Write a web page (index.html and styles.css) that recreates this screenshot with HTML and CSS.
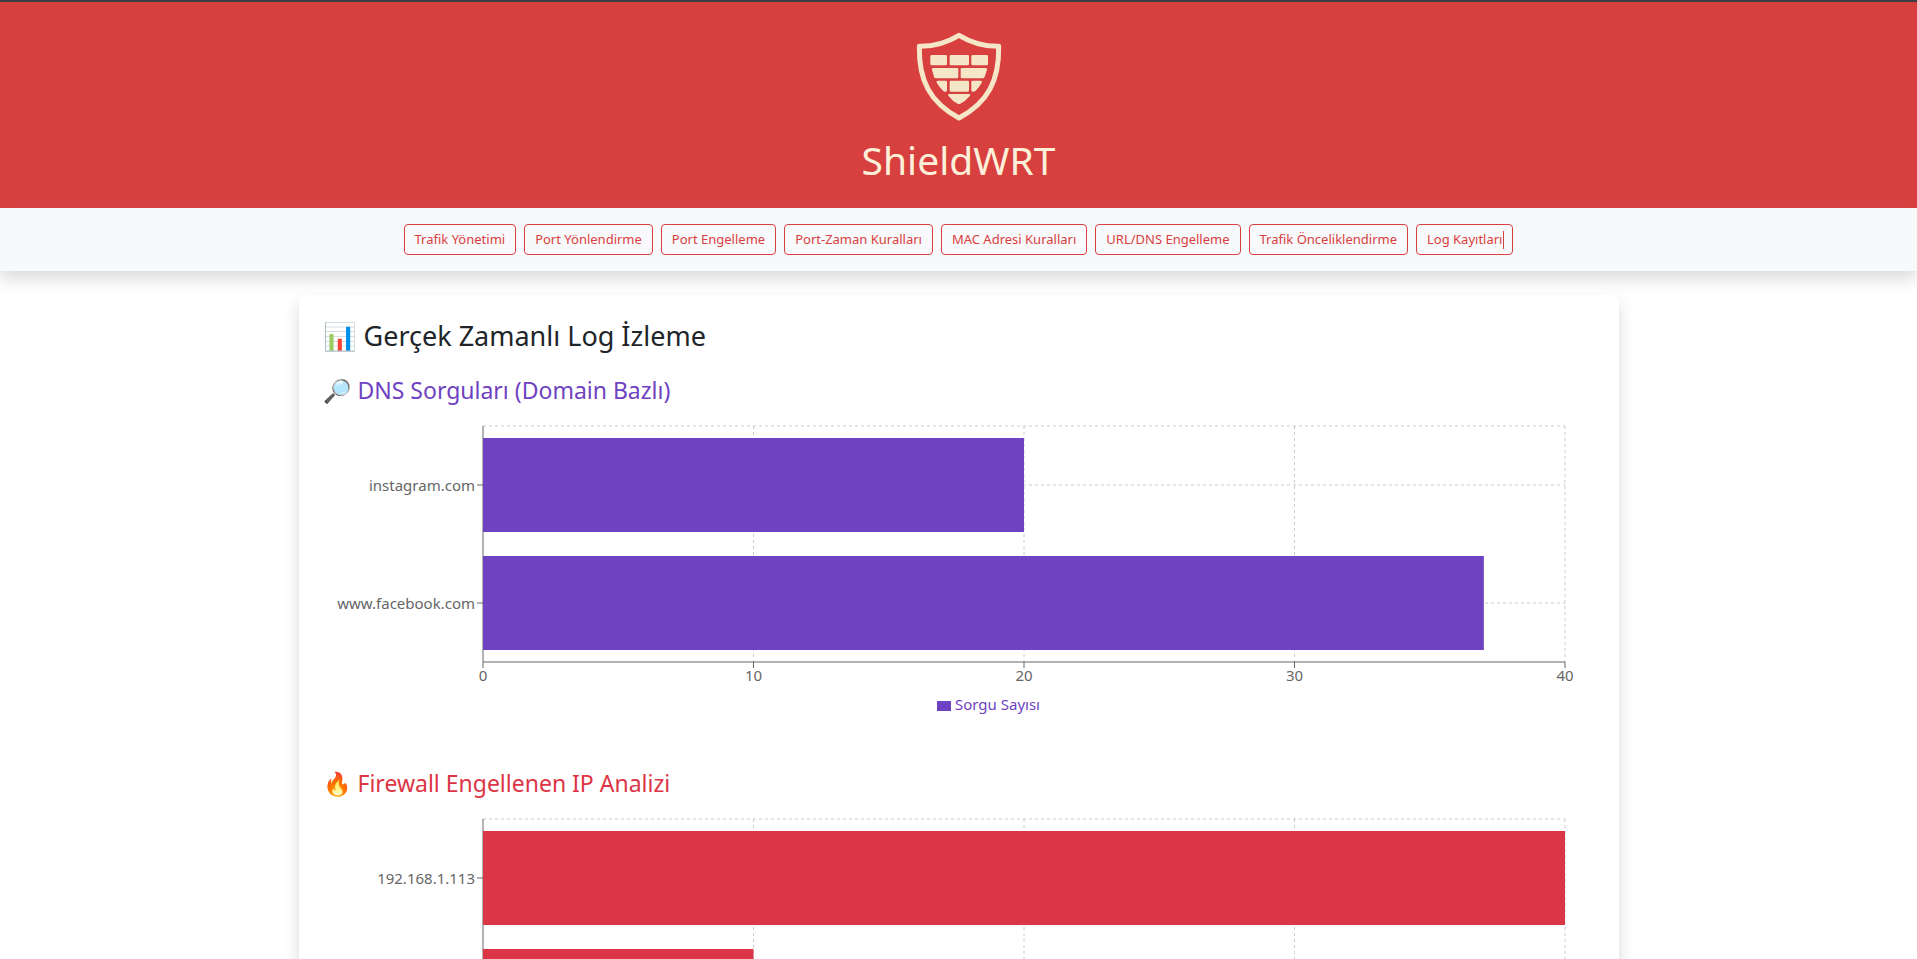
FILE: index.html
```html
<!DOCTYPE html>
<html lang="tr">
<head>
  <meta charset="utf-8">
  <meta name="viewport" content="width=device-width, initial-scale=1">
  <title>ShieldWRT</title>
  <link rel="stylesheet" href="styles.css">
</head>
<body>
  <header class="brand">
    <svg class="brand-logo" viewBox="0 3 300 300" aria-hidden="true">
      <path class="shield" d="M150 31 Q94 65 31 64 C29 166 63 233 150 279 C237 233 271 166 269 64 Q206 65 150 31 Z"/>
      <g class="bricks">
        <rect x="64" y="90" width="50" height="31" rx="4"/>
        <rect x="122" y="90" width="58" height="31" rx="4"/>
        <rect x="187" y="90" width="50" height="31" rx="4"/>
        <path d="M72 129 H144 Q148 129 148 133 V156 Q148 160 144 160 H81 Q77 160 75 155 L69 134 Q68 129 72 129 Z"/>
        <path d="M159 129 H231 Q235 129 234 134 L227 155 Q225 160 221 160 H159 Q155 160 155 156 V133 Q155 129 159 129 Z"/>
        <path d="M86 167 H110 Q114 167 114 171 V196 Q114 200 110 200 Q106 201 102 197 Q92 188 83 173 Q81 167 86 167 Z"/>
        <rect x="122" y="167" width="58" height="33" rx="4"/>
        <path d="M191 167 H215 Q221 167 218 173 Q209 189 200 197 Q195 201 191 200 Q187 200 187 196 V171 Q187 167 191 167 Z"/>
        <path d="M121 207 H181 Q186 207 183 212 Q169 229 154 236 Q150 238 146 236 Q131 229 118 212 Q115 207 121 207 Z"/>
      </g>
    </svg>
    <h1 class="brand-name">ShieldWRT</h1>
  </header>

  <nav class="menu">
    <a class="menu-link" href="#trafik">Trafik Yönetimi</a>
    <a class="menu-link" href="#port">Port Yönlendirme</a>
    <a class="menu-link" href="#port-engelleme">Port Engelleme</a>
    <a class="menu-link" href="#port-zaman">Port-Zaman Kuralları</a>
    <a class="menu-link" href="#mac">MAC Adresi Kuralları</a>
    <a class="menu-link" href="#dns">URL/DNS Engelleme</a>
    <a class="menu-link" href="#oncelik">Trafik Önceliklendirme</a>
    <a class="menu-link caret" href="#log">Log Kayıtları</a>
  </nav>

  <main class="card">
    <h2 class="card-title">📊 Gerçek Zamanlı Log İzleme</h2>

    <section class="report dns">
      <h3 class="report-title">🔎 DNS Sorguları (Domain Bazlı)</h3>
      <div class="chart">
        <svg class="plot" role="img" aria-label="DNS Sorguları">
          <g class="grid">
            <line x1="0" y1="0" x2="100%" y2="0"/>
            <line x1="0" y1="59" x2="100%" y2="59"/>
            <line x1="0" y1="177" x2="100%" y2="177"/>
            <line x1="25%" y1="0" x2="25%" y2="236"/>
            <line x1="50%" y1="0" x2="50%" y2="236"/>
            <line x1="75%" y1="0" x2="75%" y2="236"/>
            <line x1="100%" y1="0" x2="100%" y2="236"/>
          </g>
          <g class="axis">
            <line x1="0" y1="0" x2="0" y2="236"/>
            <line x1="0" y1="236" x2="100%" y2="236"/>
            <line x1="-6" y1="59" x2="0" y2="59"/>
            <line x1="-6" y1="177" x2="0" y2="177"/>
            <line x1="0" y1="236" x2="0" y2="242"/>
            <line x1="25%" y1="236" x2="25%" y2="242"/>
            <line x1="50%" y1="236" x2="50%" y2="242"/>
            <line x1="75%" y1="236" x2="75%" y2="242"/>
            <line x1="100%" y1="236" x2="100%" y2="242"/>
          </g>
          <g class="bars">
            <rect x="0" y="12" width="50%" height="94"/>
            <rect x="0" y="130" width="92.5%" height="94"/>
          </g>
          <g class="label-y">
            <text x="-8" y="65">instagram.com</text>
            <text x="-8" y="183">www.facebook.com</text>
          </g>
          <g class="label-x">
            <text x="0" y="255">0</text>
            <text x="25%" y="255">10</text>
            <text x="50%" y="255">20</text>
            <text x="75%" y="255">30</text>
            <text x="100%" y="255">40</text>
          </g>
        </svg>
        <div class="legend"><span class="swatch"></span>Sorgu Sayısı</div>
      </div>
    </section>

    <section class="report firewall">
      <h3 class="report-title">🔥 Firewall Engellenen IP Analizi</h3>
      <div class="chart">
        <svg class="plot" role="img" aria-label="Engellenen IP adresleri">
          <g class="grid">
            <line x1="0" y1="0" x2="100%" y2="0"/>
            <line x1="0" y1="59" x2="100%" y2="59"/>
            <line x1="0" y1="177" x2="100%" y2="177"/>
            <line x1="25%" y1="0" x2="25%" y2="236"/>
            <line x1="50%" y1="0" x2="50%" y2="236"/>
            <line x1="75%" y1="0" x2="75%" y2="236"/>
            <line x1="100%" y1="0" x2="100%" y2="236"/>
          </g>
          <g class="axis">
            <line x1="0" y1="0" x2="0" y2="236"/>
            <line x1="0" y1="236" x2="100%" y2="236"/>
            <line x1="-6" y1="59" x2="0" y2="59"/>
            <line x1="-6" y1="177" x2="0" y2="177"/>
          </g>
          <g class="bars">
            <rect x="0" y="12" width="100%" height="94"/>
            <rect x="0" y="130" width="25%" height="94"/>
          </g>
          <g class="label-y">
            <text x="-8" y="65">192.168.1.113</text>
          </g>
        </svg>
      </div>
    </section>
  </main>
</body>
</html>
```
FILE: styles.css
```css
* {
  box-sizing: border-box;
}

body {
  margin: 0;
  background: #fff;
  color: #212529;
  font-family: "Noto Sans", "Open Sans", sans-serif;
  font-size: 15px;
  line-height: 24px;
}

h1,
h2,
h3 {
  margin: 0;
  font-weight: 400;
}

.brand {
  display: flex;
  flex-direction: column;
  align-items: center;
  gap: 10px;
  padding: 24px;
  border-top: 2px solid #3b3d40;
  background: #d84040;
}

.brand-logo {
  width: 100px;
  height: 100px;
}

.shield {
  fill: none;
  stroke: #f5e6c8;
  stroke-width: 15;
  stroke-linejoin: round;
}

.bricks {
  fill: #f5e6c8;
}

.brand-name {
  color: #fdf0d9;
  font-size: 39px;
  line-height: 48px;
}

.menu {
  display: flex;
  flex-wrap: wrap;
  justify-content: center;
  gap: 8px;
  padding: 16px;
  background: #f8f9fb;
  box-shadow: 0 8px 16px rgba(0, 0, 0, 0.15);
}

.menu-link {
  position: relative;
  padding: 4px 10px;
  border: 1px solid #d84040;
  border-radius: 4px;
  color: #d84040;
  font-size: 13px;
  line-height: 21px;
  text-decoration: none;
}

.caret::after {
  content: "";
  position: absolute;
  top: 6px;
  right: 8px;
  width: 1px;
  height: 18px;
  background: #d84040;
}

.card {
  max-width: 1320px;
  margin: 24px auto;
  padding: 24px;
  border-radius: 6px;
  background: #fff;
  box-shadow: 0 8px 16px rgba(0, 0, 0, 0.15);
}

.card-title {
  margin-bottom: 24px;
  font-size: 27px;
  line-height: 33px;
}

.report {
  margin-bottom: 48px;
}

.dns {
  color: #6f42c1;
}

.firewall {
  color: #dc3545;
}

.report-title {
  margin-bottom: 16px;
  font-size: 23px;
  line-height: 29px;
}

.chart {
  height: 300px;
  padding-top: 5px;
}

.plot {
  display: block;
  width: calc(100% - 190px);
  height: 236px;
  margin-left: 160px;
  overflow: visible;
}

.grid {
  stroke: #ccc;
  stroke-dasharray: 3 3;
}

.axis {
  stroke: #666;
}

.bars {
  fill: currentColor;
}

.label-x,
.label-y {
  fill: #666;
}

.label-x {
  text-anchor: middle;
}

.label-y {
  text-anchor: end;
}

.legend {
  display: flex;
  align-items: center;
  justify-content: center;
  gap: 4px;
  padding: 30px 40px 0 100px;
}

.swatch {
  width: 14px;
  height: 10px;
  margin-top: 4px;
  background: currentColor;
}
```
